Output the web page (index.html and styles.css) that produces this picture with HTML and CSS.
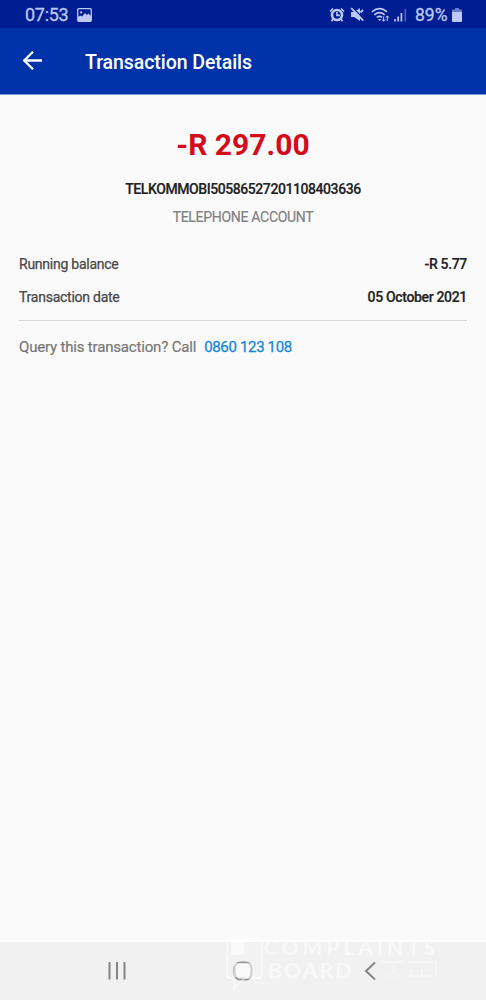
FILE: index.html
```html
<!DOCTYPE html>
<html lang="en">
<head>
<meta charset="utf-8">
<title>Transaction Details</title>
<link rel="stylesheet" href="styles.css">
</head>
<body>
<div class="phone">
  <div class="status">
    <span class="time">07:53</span>
    <svg class="photo" width="15" height="14" viewBox="0 0 15 14"><rect x=".7" y=".7" width="13.6" height="12.6" rx="1" fill="none" stroke="currentColor" stroke-width="1.3"/><circle cx="4.2" cy="4.4" r="1.1" fill="currentColor"/><path d="M1 9l2-1.500 2 1 3-3.500 2 2 1.500-1.500L14 8v5H1z" fill="currentColor"/></svg>
    <div class="indicators">
      <svg width="16" height="16" viewBox="0 0 16 16"><circle cx="8" cy="8" r="5" fill="none" stroke="currentColor" stroke-width="2.600"/><path d="M8 5v3.400h2.800M1 4.500l3-3M15 4.500l-3-3M4 12l-1.500 2.300M12 12l1.500 2.300" fill="none" stroke="currentColor" stroke-width="1.700"/></svg>
      <svg class="mute" width="15" height="15" viewBox="0 0 15 15"><path d="M1 5h3l6-4v13l-6-4H1z" fill="currentColor"/><path d="M2.500 .5L14.500 12.500" stroke="#001d91" stroke-width="1.200"/><path d="M1.200 1.200L13.300 13.600M10.500 5.500l2.500-2.500" stroke="currentColor" stroke-width="1.800"/></svg>
      <svg class="wifi" width="19" height="16" viewBox="0 0 19 16"><path d="M1 4.800Q8.500-1.500 16 4.800M3.300 7.800Q8.500 3.600 13.700 7.800M5.700 10.400Q8.500 8.400 11 10.300" fill="none" stroke="currentColor" stroke-width="1.700"/><path d="M7 12l1.700 2 1.500-2z" fill="currentColor"/><path d="M12.600 9.500v4.600M10.900 12.400l1.700 1.900 1.500-1.900M16.300 14V9M14.800 10.700l1.500-1.900 1.600 1.900" fill="none" stroke="currentColor"/></svg>
      <svg class="signal" width="13" height="14" viewBox="0 0 13 14"><path d="M1 11v2.500M4.200 8.500v5M7.400 5v8.500" stroke="currentColor" stroke-width="1.700"/><path d="M11.300 1v12.500" stroke="currentColor" stroke-width="1.600" opacity=".4"/></svg>
      <span class="percent">89%</span>
      <svg class="battery" width="10" height="14" viewBox="0 0 10 14"><path d="M3 0h4v1.500h2q1 0 1 1V4H0V2.500q0-1 1-1h2z" fill="currentColor" opacity=".55"/><path d="M0 4h10v9q0 1-1 1H1q-1 0-1-1z" fill="currentColor"/></svg>
    </div>
  </div>
  <header class="bar">
    <svg width="20" height="20" viewBox="0 0 20 20"><path d="M20 9.500H2.500M11 .8L2.200 9.500l8.800 8.700" fill="none" stroke="currentColor" stroke-width="2.300"/></svg>
    <h1 class="title">Transaction Details</h1>
  </header>
  <main class="details">
    <div class="amount">-R 297.00</div>
    <div class="reference">TELKOMMOBI50586527201108403636</div>
    <div class="category">TELEPHONE ACCOUNT</div>
    <div class="row first"><span class="label">Running balance</span><span class="value">-R 5.77</span></div>
    <div class="row"><span class="label">Transaction date</span><span class="value">05 October 2021</span></div>
    <div class="query"><span class="question">Query this transaction? Call</span><a class="number">0860 123 108</a></div>
  </main>
  <nav class="nav">
    <svg width="486" height="58" viewBox="0 0 486 58" fill="none" stroke="#858585"><path d="M109.500 20v17.500M117 20v17.500M124.500 20v17.500" stroke-width="2"/><rect x="234.500" y="20.500" width="17" height="17" rx="5.500" stroke="#8c8c8c" stroke-width="2"/><path d="M375 20.500l-9 8.500 9 8.500" stroke-width="2"/></svg>
  </nav>
  <div class="watermark">
    <svg class="emblem" width="37" height="52" viewBox="0 0 37 52"><path d="M5 1h27q4 0 4 4v31q0 4-4 4H19L8 50V40H5q-4 0-4-4V5q0-4 4-4z" fill="#fff" fill-opacity=".1" stroke="#fff" stroke-opacity=".5" stroke-width="2"/><path d="M5 3h13v14H5zM8 25h20v14H8z" fill="#fff" fill-opacity=".5"/></svg>
    <span class="word complaints">COMPLAINTS</span>
    <span class="word board">BOARD</span>
    <svg class="ticks" width="58" height="20" viewBox="0 0 58 20"><path d="M1 3h22M28 3h28v14M2 17h4M9 17h4M16 17h4M25 17h28M14 6v9M31 7v8M42 7v8" fill="none" stroke="#fff" stroke-opacity=".3" stroke-width="2"/></svg>
  </div>
</div>
</body>
</html>
```
FILE: styles.css
```css
* { box-sizing: border-box; }
body { margin: 0; font-family: Roboto, "Liberation Sans", sans-serif; }
.phone { position: relative; width: 486px; height: 1000px; display: flex; flex-direction: column; background: #fafafa; overflow: hidden; white-space: nowrap; }
svg { display: block; flex: none; }
.status { height: 28px; padding: 1px 24px 0 25px; display: flex; align-items: center; background: #001d91; color: #bdc8f4; }
.time { width: 52px; font-size: 18px; line-height: 28px; letter-spacing: -.3px; -webkit-text-stroke: .3px; }
.indicators { margin-left: auto; display: flex; align-items: center; }
.mute { margin-left: 5px; }
.wifi { margin-left: 6px; }
.signal { margin-left: 4px; }
.percent { margin-left: 8px; width: 33px; font-size: 17.500px; line-height: 28px; -webkit-text-stroke: .3px; }
.battery { margin-left: 4px; }
.bar { height: 67px; padding: 0 22px; display: flex; align-items: center; background: #0033aa; border-bottom: 1px solid #7896c8; color: #fff; }
.title { margin: 4px 0 0 43px; font-size: 19.500px; line-height: 24px; font-weight: 500; letter-spacing: -.07px; }
.details { flex: 1; padding: 30px 19px 0; border-bottom: 2px solid #fff; }
.amount { color: #d30b1b; text-align: center; font-size: 30px; line-height: 40px; font-weight: 700; }
.reference { margin-top: 14px; color: #222; text-align: center; font-size: 14px; line-height: 20px; font-weight: 500; letter-spacing: -.43px; -webkit-text-stroke: .2px; }
.category { margin-top: 8px; color: #808080; text-align: center; font-size: 14px; line-height: 20px; letter-spacing: -.3px; -webkit-text-stroke: .2px; }
.row { height: 33px; display: flex; justify-content: space-between; align-items: center; font-size: 14px; }
.first { margin-top: 20px; }
.label { color: #484848; letter-spacing: -.25px; -webkit-text-stroke: .25px; }
.value { color: #222; font-weight: 500; letter-spacing: -.33px; -webkit-text-stroke: .2px; }
.query { margin-top: 7px; padding-top: 16px; border-top: 1px solid #d6d6d6; display: flex; gap: 8px; font-size: 15px; line-height: 20px; }
.question { color: #777; letter-spacing: -.18px; -webkit-text-stroke: .2px; }
.number { color: #1687d8; letter-spacing: -.33px; -webkit-text-stroke: .3px; }
.nav { height: 58px; background: #f1f1f1; }
.watermark { position: absolute; left: 226px; top: 938px; width: 220px; height: 54px; color: rgba(255, 255, 255, .55); font-family: Lato, sans-serif; font-weight: 700; }
.emblem { position: absolute; left: 0; top: 0; }
.word { position: absolute; font-size: 21px; line-height: 20px; }
.complaints { left: 38px; top: -1px; letter-spacing: 4px; }
.board { left: 42px; top: 22px; letter-spacing: 2.200px; }
.ticks { position: absolute; left: 154px; top: 21px; }
```
